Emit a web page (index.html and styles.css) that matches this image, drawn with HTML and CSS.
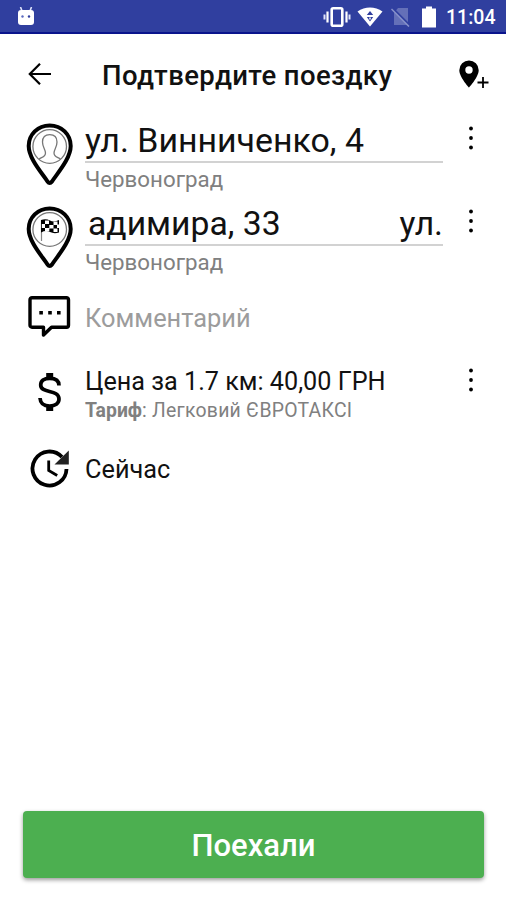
FILE: index.html
```html
<!DOCTYPE html>
<html lang="ru">
    <head>
        <meta charset="UTF-8">
        <meta name="viewport" content="width=device-width, initial-scale=1" />

        <title>Подтвердите поездку</title>

        <link rel="stylesheet" href="styles.css">
    </head>

    <body>
        <div class="statusBar">
            <svg class="robot" width="20" height="20" viewBox="0 0 20 20">
                <path d="M4.500 0l1.500 4M15.500 0l-1.500 4" stroke="#dfe3fa" stroke-width="1.600" />
                <rect x="2" y="3" width="16" height="15" rx="3" fill="#fff" />
                <circle cx="6.500" cy="9.500" r="1.200" fill="#5b6abf" />
                <circle cx="13" cy="9.500" r="1.200" fill="#303f9f" />
            </svg>
            <svg class="vibrate" width="28" height="22" viewBox="0 0 28 22">
                <rect x="8.700" y="2.200" width="10.600" height="17.600" rx="1.500" fill="none" stroke="#fff" stroke-width="2.600" />
                <path d="M4.500 5.500v11M23.500 5.500v11" stroke="#fff" stroke-width="2.200" />
                <path d="M1.500 8.500v5M26.500 8.500v5" stroke="#dfe3fa" stroke-width="2" />
            </svg>
            <svg class="wifi" width="26" height="20" viewBox="0 0 26 20">
                <path d="M0.500 4.500C8 -1 18 -1 25.500 4.500L13 19.500z" fill="#fff" />
                <path d="M13 4l3.200 4h-6.400zM9.800 10h6.400l-3.200 4.500z" fill="#303f9f" />
                <path d="M13 10.500v2" stroke="#fff" stroke-width="1.500" />
            </svg>
            <svg class="sim" width="20" height="20" viewBox="0 0 20 20">
                <path d="M7 1h10v17H3V6z" fill="#6470b8" />
                <path d="M1 1l18 18" stroke="#303f9f" stroke-width="2.500" />
                <path d="M0.500 2l17.500 17.500" stroke="#8a94cc" stroke-width="1.500" />
            </svg>
            <svg class="battery" width="16" height="22" viewBox="0 0 16 22">
                <path d="M5 0.500h6v2h4v19H1v-19h4z" fill="#fff" />
            </svg>
            <span class="clock">11:04</span>
        </div>

        <div class="header">
            <svg class="back" width="24" height="24" viewBox="0 0 24 24">
                <path d="M23 12H2M12 1.700L1.800 12 12 22.300" />
            </svg>
            <h1 class="title">Подтвердите поездку</h1>
            <svg class="addPoint" width="32" height="30" viewBox="0 0 32 30">
                <path d="M11 0.500A9.700 9.700 0 0 0 1.300 10.200C1.300 17 11 27.500 11 27.500S20.700 17 20.700 10.200A9.700 9.700 0 0 0 11 0.500zM11 6.300a3.700 3.700 0 1 1 0 7.400 3.700 3.700 0 0 1 0-7.400z" fill="#000" fill-rule="evenodd" />
                <path d="M25 17v11M19.500 22.500h11" stroke="#000" stroke-width="1.800" />
            </svg>
        </div>

        <div class="row address">
            <svg class="icon" width="48" height="64" viewBox="0 0 48 64">
                <path class="pin" d="M23.700 3.500C11.800 3.500 2.700 12.500 2.700 24C2.700 36.500 16 51 21.500 59.500Q23.700 62.500 26 59.500C31.500 51 44.700 36.500 44.700 24C44.700 12.500 35.600 3.500 23.700 3.500z" />
                <circle class="ring" cx="23.700" cy="24.500" r="16.800" />
                <path class="ring" d="M13 37C16 35 19.500 35 19.500 31C19.500 27.500 16.500 25.500 16.500 20C16.500 15 19 12.700 23.700 12.700S31 15 31 20C31 25.500 28 27.500 28 31C28 35 31.500 35 34.500 37" />
            </svg>
            <div class="content">
                <div class="field">ул. Винниченко, 4</div>
                <div class="city">Червоноград</div>
            </div>
            <svg class="more" width="6" height="26" viewBox="0 0 6 26">
                <circle cx="3" cy="3.500" r="1.900" />
                <circle cx="3" cy="13" r="1.900" />
                <circle cx="3" cy="22.500" r="1.900" />
            </svg>
        </div>

        <div class="row address">
            <svg class="icon" width="48" height="64" viewBox="0 0 48 64">
                <path class="pin" d="M23.700 3.500C11.800 3.500 2.700 12.500 2.700 24C2.700 36.500 16 51 21.500 59.500Q23.700 62.500 26 59.500C31.500 51 44.700 36.500 44.700 24C44.700 12.500 35.600 3.500 23.700 3.500z" />
                <circle class="ring" cx="23.700" cy="24.500" r="16.800" />
                <path d="M15.500 15v21" stroke="#888" stroke-width="1.200" />
                <path d="M15 15q5-1.500 9 0.500t9-0.500v12.500q-5 1.500-9-0.500t-9 0.500z" fill="#000" />
                <path d="M19 15.500h4v3.500h-4zM27.500 16.500h4v3.500h-4zM15.800 19h3.200v4h-3.200zM23.300 20h4.200v3.500h-4.200zM31 19.500h2.300v3.500h-2.300zM19 23h4.300v3.200h-4.300zM27.500 23.500h4v3.500h-4z" fill="#fff" />
            </svg>
            <div class="content">
                <div class="field marquee"><span>адимира, 33</span><span>ул.</span></div>
                <div class="city">Червоноград</div>
            </div>
            <svg class="more" width="6" height="26" viewBox="0 0 6 26">
                <circle cx="3" cy="3.500" r="1.900" />
                <circle cx="3" cy="13" r="1.900" />
                <circle cx="3" cy="22.500" r="1.900" />
            </svg>
        </div>

        <div class="row comment">
            <svg class="icon" width="48" height="44" viewBox="0 0 48 44">
                <path d="M6 2.700h34.500a2 2 0 0 1 2 2v25.500a2 2 0 0 1-2 2H25.500L17.500 40V32.200H6a2 2 0 0 1-2-2V4.700a2 2 0 0 1 2-2z" fill="none" stroke="#000" stroke-width="3.400" stroke-linejoin="round" />
                <path d="M13.300 16h3.600v3.600h-3.600zM22.200 16h3.600v3.600h-3.600zM31 16h3.600v3.600h-3.600z" />
            </svg>
            <div class="content placeholder">Комментарий</div>
        </div>

        <div class="row price">
            <svg class="icon" width="48" height="40" viewBox="0 0 48 40">
                <path d="M33 13.500C33 8.700 29.500 6.300 23.700 6.300C18 6.300 14.700 8.800 14.700 13C14.700 22 33 17 33 27C33 31.500 29 34 23.700 34C17.800 34 14.300 31.300 14 26" fill="none" stroke="#000" stroke-width="3.700" />
                <path d="M20.200 1h7v5h-7zM20.200 34h7v5h-7z" />
            </svg>
            <div class="content">
                <div class="cost">Цена за 1.7 км: 40,00 ГРН</div>
                <div class="tariff"><b>Тариф</b>: Легковий ЄВРОТАКСІ</div>
            </div>
            <svg class="more" width="6" height="26" viewBox="0 0 6 26">
                <circle cx="3" cy="3.500" r="1.900" />
                <circle cx="3" cy="13" r="1.900" />
                <circle cx="3" cy="22.500" r="1.900" />
            </svg>
        </div>

        <div class="row time">
            <svg class="icon" width="48" height="40" viewBox="0 0 48 40">
                <path d="M36 8A17 17 0 1 0 40.500 20" fill="none" stroke="#000" stroke-width="3.800" />
                <path d="M42.800 1.500v14H28.500z" fill="#222" />
                <path d="M22.700 11.500v10l8.500 5" fill="none" stroke="#000" stroke-width="2.800" />
            </svg>
            <div class="content">Сейчас</div>
        </div>

        <button class="go">Поехали</button>
    </body>
</html>
```

FILE: styles.css
```css
body {
    font-family: Roboto, "Noto Sans", sans-serif;
    color: #111;
    background-color: #fff;
    margin: 0;
    height: 900px;
    display: flex;
    flex-direction: column;
    overflow: hidden;
}

.statusBar {
    display: flex;
    align-items: center;
    box-sizing: border-box;
    height: 34px;
    padding: 1px 11px 0 16px;
    background-color: #303f9f;
    border-bottom: 2px solid #0a148c;
    color: #fff;
}

.vibrate {
    margin-left: auto;
}

.wifi {
    margin-left: 6px;
}

.sim {
    margin-left: 8px;
}

.battery {
    margin-left: 10px;
}

.clock {
    width: 49px;
    margin-left: 9px;
    padding-top: 2px;
    font-size: 19.5px;
    font-weight: 500;
    white-space: nowrap;
}

.header {
    display: flex;
    align-items: center;
    height: 82px;
    padding: 0 16px 0 28px;
}

.back {
    fill: none;
    stroke: #000;
    stroke-width: 2.2;
    margin-bottom: 2px;
}

.title {
    margin: 0 auto 0 50px;
    font-size: 27.5px;
    font-weight: 500;
    letter-spacing: 0.4px;
    white-space: nowrap;
}

.row {
    display: flex;
    padding: 0 32px 0 26px;
}

.icon {
    flex: none;
    margin-right: 11px;
}

.content {
    width: 358px;
    white-space: nowrap;
}

.more {
    margin-left: 25px;
}

.pin {
    fill: #fff;
    stroke: #000;
    stroke-width: 4;
}

.ring {
    fill: none;
    stroke: #777;
    stroke-width: 1.3;
}

.address {
    height: 77px;
    padding-top: 6px;
}

.address .more {
    margin-top: 3px;
}

.field {
    height: 39px;
    line-height: 37px;
    font-size: 33.9px;
    border-bottom: 2px solid #d2d2d2;
}

.marquee {
    display: flex;
    justify-content: space-between;
    padding-left: 3px;
    font-size: 33.7px;
}

.city {
    line-height: 33px;
    font-size: 22.3px;
    color: #808080;
}

.comment {
    height: 72px;
    padding-top: 13px;
}

.placeholder {
    line-height: 47px;
    font-size: 25.4px;
    color: #9c9c9c;
}

.price {
    height: 82px;
}

.price .icon {
    margin-top: 5px;
}

.cost {
    line-height: 29px;
    font-size: 25.2px;
}

.tariff {
    line-height: 29px;
    font-size: 19.4px;
    letter-spacing: 0.25px;
    color: #808080;
}

.tariff b {
    letter-spacing: 0;
}

.time .content {
    line-height: 42px;
    font-size: 25.3px;
}

.go {
    height: 67px;
    margin: auto 22px 22px 23px;
    padding: 2px 0 0;
    border: 0;
    border-radius: 4px;
    background-color: #4caf50;
    box-shadow: 0 2px 4px rgba(0, 0, 0, 0.4);
    color: #fff;
    font-family: inherit;
    font-size: 31px;
    font-weight: 500;
}
```
